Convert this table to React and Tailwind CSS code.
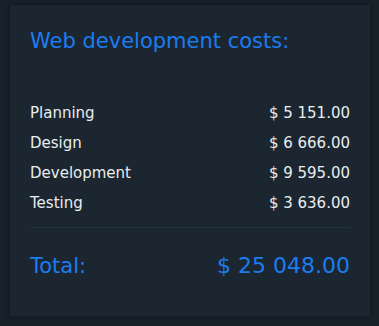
export default function App() {
  const rows = [
    ["Planning", "$ 5 151.00"],
    ["Design", "$ 6 666.00"],
    ["Development", "$ 9 595.00"],
    ["Testing", "$ 3 636.00"],
  ];
  return (
    <div className="w-[379px] h-[326px] bg-[#17212a] pt-[5px] pl-[10px]" style={{ fontFamily: '"DejaVu Sans", "Liberation Sans", sans-serif' }}>
      <div className="w-[360px] h-[311px] bg-[#1b2630] shadow-[0_0_6px_rgba(0,0,0,0.35)] px-5 pt-[22px]">
        <h2 className="text-[#1b7cf0] text-[21px] leading-[28px]">Web development costs:</h2>
        <div className="mt-[43px] flex flex-col">
          {rows.map(([k, v]) => (
            <div key={k} className="flex justify-between h-[30px] items-center text-[#e9ecef] text-[15px]">
              <span>{k}</span>
              <span>{v}</span>
            </div>
          ))}
        </div>
        <div className="mt-[9px] h-px bg-[#24323e]" />
        <div className="mt-[24px] flex justify-between items-center text-[#1b7cf0] text-[21px] leading-[28px]">
          <span>Total:</span>
          <span className="text-[22px]">$ 25 048.00</span>
        </div>
      </div>
    </div>
  );
}
